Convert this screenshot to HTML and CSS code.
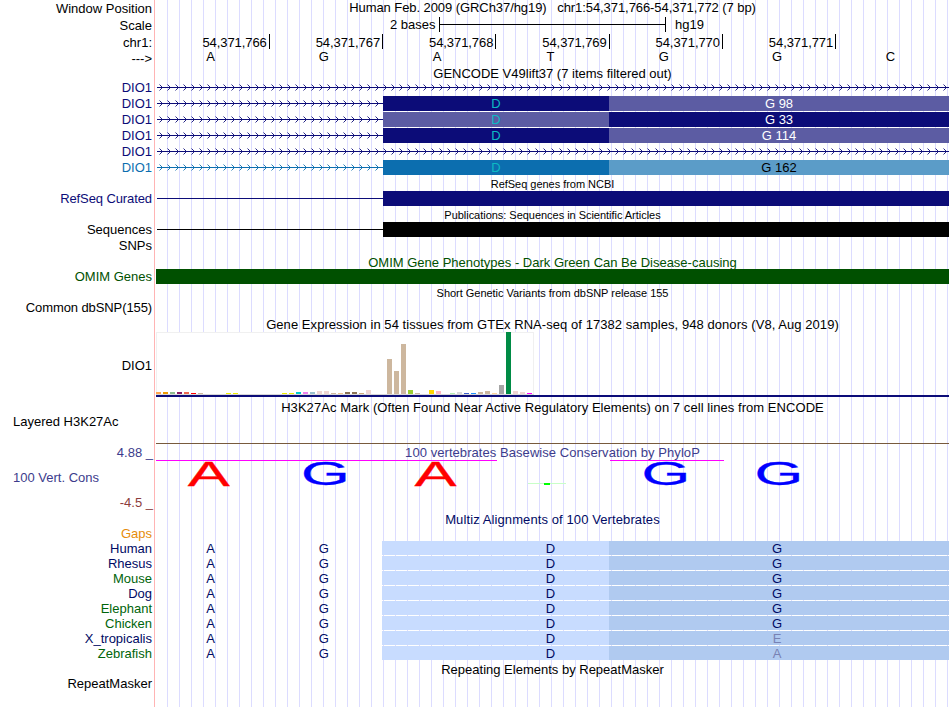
FILE: index.html
```
<!DOCTYPE html>
<html lang="en">
<head>
  <meta charset="UTF-8" />
  <title>Human chr1:54,371,766-54,371,772 Genome Browser</title>
  <link rel="stylesheet" href="styles.css">
</head>
<body>

  <!-- shared arrow patterns for the introns -->
  <svg class="defs" width="0" height="0">
    <defs>
      <pattern id="arrowNavy" width="8" height="16" patternUnits="userSpaceOnUse">
        <path d="M3.5 4.5L6.5 7.5L3.5 10.5" fill="none" stroke="#0c0c78" stroke-width="0.9" />
      </pattern>
      <pattern id="arrowBlue" width="8" height="16" patternUnits="userSpaceOnUse">
        <path d="M3.5 4.5L6.5 7.5L3.5 10.5" fill="none" stroke="#0c6eaf" stroke-width="0.9" />
      </pattern>
    </defs>
  </svg>

  <div class="browser">

    <div class="row h16">
      <div class="label low">Window Position</div>
      <div class="track title tight">Human Feb. 2009 (GRCh37/hg19) &nbsp; chr1:54,371,766-54,371,772 (7 bp)</div>
    </div>
    <div class="row h17">
      <div class="label low">Scale</div>
      <div class="track scale">
        <span class="scale-size">2 bases</span>
        <span class="scale-bar"></span>
        <span>hg19</span>
      </div>
    </div>
    <div class="row h17">
      <div class="label low">chr1:</div>
      <div class="track positions">
        <span>54,371,766</span><span>54,371,767</span><span>54,371,768</span><span>54,371,769</span><span>54,371,770</span><span>54,371,771</span>
      </div>
    </div>
    <div class="row h15">
      <div class="label low">---&gt;</div>
      <div class="track bases sequence">
        <span>A</span><span>G</span><span>A</span><span>T</span><span>G</span><span>G</span><span>C</span>
      </div>
    </div>

    <!-- GENCODE -->
    <div class="row h15">
      <div class="label"></div>
      <div class="track title low">GENCODE V49lift37 (7 items filtered out)</div>
    </div>
    <div class="row h16 navy">
      <div class="label">DIO1</div>
      <div class="track gene">
        <svg class="intron full" height="16"><rect width="100%" height="16" fill="url(#arrowNavy)" /><rect x="1" y="7" width="100%" height="1" fill="#0c0c78" /></svg>
      </div>
    </div>
    <div class="row h16 navy">
      <div class="label">DIO1</div>
      <div class="track gene">
        <svg class="intron" height="16"><rect width="100%" height="16" fill="url(#arrowNavy)" /><rect x="1" y="7" width="100%" height="1" fill="#0c0c78" /></svg>
        <span class="codon first dark">D</span><span class="codon light">G 98</span>
      </div>
    </div>
    <div class="row h16 navy">
      <div class="label">DIO1</div>
      <div class="track gene">
        <svg class="intron" height="16"><rect width="100%" height="16" fill="url(#arrowNavy)" /><rect x="1" y="7" width="100%" height="1" fill="#0c0c78" /></svg>
        <span class="codon first light">D</span><span class="codon dark">G 33</span>
      </div>
    </div>
    <div class="row h16 navy">
      <div class="label">DIO1</div>
      <div class="track gene">
        <svg class="intron" height="16"><rect width="100%" height="16" fill="url(#arrowNavy)" /><rect x="1" y="7" width="100%" height="1" fill="#0c0c78" /></svg>
        <span class="codon first dark">D</span><span class="codon light">G 114</span>
      </div>
    </div>
    <div class="row h16 navy">
      <div class="label">DIO1</div>
      <div class="track gene">
        <svg class="intron full" height="16"><rect width="100%" height="16" fill="url(#arrowNavy)" /><rect x="1" y="7" width="100%" height="1" fill="#0c0c78" /></svg>
      </div>
    </div>
    <div class="row h16 blue">
      <div class="label">DIO1</div>
      <div class="track gene">
        <svg class="intron" height="16"><rect width="100%" height="16" fill="url(#arrowBlue)" /><rect x="1" y="7" width="100%" height="1" fill="#0c6eaf" /></svg>
        <span class="codon first dark">D</span><span class="codon light">G 162</span>
      </div>
    </div>

    <!-- RefSeq / publications / OMIM / dbSNP -->
    <div class="row h15">
      <div class="label"></div>
      <div class="track title small">RefSeq genes from NCBI</div>
    </div>
    <div class="row h16 navy">
      <div class="label snug">RefSeq Curated</div>
      <div class="track item"><span class="thin"></span><span class="thick"></span></div>
    </div>
    <div class="row h15">
      <div class="label"></div>
      <div class="track title small">Publications: Sequences in Scientific Articles</div>
    </div>
    <div class="row h16 black">
      <div class="label">Sequences</div>
      <div class="track item"><span class="thin"></span><span class="thick"></span></div>
    </div>
    <div class="row h16">
      <div class="label">SNPs</div>
      <div class="track"></div>
    </div>
    <div class="row h15 green">
      <div class="label"></div>
      <div class="track title low">OMIM Gene Phenotypes - Dark Green Can Be Disease-causing</div>
    </div>
    <div class="row h16 green">
      <div class="label">OMIM Genes</div>
      <div class="track item"><span class="thick"></span></div>
    </div>
    <div class="row h15">
      <div class="label"></div>
      <div class="track title small">Short Genetic Variants from dbSNP release 155</div>
    </div>
    <div class="row h16">
      <div class="label snug">Common dbSNP(155)</div>
      <div class="track"></div>
    </div>

    <!-- GTEx -->
    <div class="row h16">
      <div class="label"></div>
      <div class="track title low wide">Gene Expression in 54 tissues from GTEx RNA-seq of 17382 samples, 948 donors (V8, Aug 2019)</div>
    </div>
    <div class="row gtex">
      <div class="label">DIO1</div>
      <div class="track gtex-track"><div class="gtex-chart" id="gtex"></div></div>
    </div>

    <!-- H3K27Ac -->
    <div class="row h17 h3k-title">
      <div class="label"></div>
      <div class="track title wide">H3K27Ac Mark (Often Found Near Active Regulatory Elements) on 7 cell lines from ENCODE</div>
    </div>
    <div class="row h3k">
      <div class="label left">Layered H3K27Ac</div>
      <div class="track h3k-line"></div>
    </div>

    <!-- conservation -->
    <div class="row h16 cons">
      <div class="label range low">4.88 _</div>
      <div class="track title wide cons-title">100 vertebrates Basewise Conservation by PhyloP</div>
    </div>
    <div class="row phylop cons">
      <div class="label left">100 Vert. Cons</div>
      <div class="track">
        <svg class="logo" width="793" height="35">
          <rect x="0" y="0" width="341" height="1" fill="#ff00ff" />
          <rect x="454" y="0" width="114" height="1" fill="#ff00ff" />
          <text class="a" transform="translate(52.7 26) scale(1.8 1)">A</text>
          <text class="g" transform="translate(169.5 25.4) scale(1.9 1)">G</text>
          <text class="a" transform="translate(279.5 26) scale(1.8 1)">A</text>
          <rect x="372" y="23" width="38" height="1" fill="#c8ffc8" />
          <rect x="388" y="23" width="6" height="2" fill="#00ff00" />
          <text class="g" transform="translate(510 25.4) scale(1.9 1)">G</text>
          <text class="g" transform="translate(623 25.4) scale(1.9 1)">G</text>
        </svg>
      </div>
    </div>
    <div class="row h17 cons-min">
      <div class="label range">-4.5 _</div>
      <div class="track"></div>
    </div>

    <!-- multiz -->
    <div class="row h15 ink">
      <div class="label"></div>
      <div class="track title wider">Multiz Alignments of 100 Vertebrates</div>
    </div>
    <div class="row h14 gaps">
      <div class="label">Gaps</div>
      <div class="track"></div>
    </div>
    <div class="row h15 ink">
      <div class="label">Human</div>
      <div class="track bases align"><span>A</span><span>G</span><span></span><span>D</span><span></span><span>G</span></div>
    </div>
    <div class="row h15 ink">
      <div class="label">Rhesus</div>
      <div class="track bases align"><span>A</span><span>G</span><span></span><span>D</span><span></span><span>G</span></div>
    </div>
    <div class="row h15 ink">
      <div class="label alt">Mouse</div>
      <div class="track bases align"><span>A</span><span>G</span><span></span><span>D</span><span></span><span>G</span></div>
    </div>
    <div class="row h15 ink">
      <div class="label">Dog</div>
      <div class="track bases align"><span>A</span><span>G</span><span></span><span>D</span><span></span><span>G</span></div>
    </div>
    <div class="row h15 ink">
      <div class="label alt">Elephant</div>
      <div class="track bases align"><span>A</span><span>G</span><span></span><span>D</span><span></span><span>G</span></div>
    </div>
    <div class="row h15 ink">
      <div class="label alt">Chicken</div>
      <div class="track bases align"><span>A</span><span>G</span><span></span><span>D</span><span></span><span>G</span></div>
    </div>
    <div class="row h15 ink">
      <div class="label">X_tropicalis</div>
      <div class="track bases align"><span>A</span><span>G</span><span></span><span>D</span><span></span><span class="diff">E</span></div>
    </div>
    <div class="row h15 ink">
      <div class="label alt">Zebrafish</div>
      <div class="track bases align"><span>A</span><span>G</span><span></span><span>D</span><span></span><span class="diff">A</span></div>
    </div>

    <!-- RepeatMasker -->
    <div class="row h15">
      <div class="label"></div>
      <div class="track title low">Repeating Elements by RepeatMasker</div>
    </div>
    <div class="row h15">
      <div class="label">RepeatMasker</div>
      <div class="track"></div>
    </div>
  </div>

  <script>
    // [height, color] for each of the 54 tissues
    const tissues = [
      [2, '#ffa54f'], [2, '#ee9a00'], [2, '#8fbc8f'], [2, '#8b1c62'], [2, '#ee6a50'], [1, '#ff0000'],
      [1, '#cdb79e'], [0, ''], [0, ''], [0, ''], [1, '#eeee00'], [1, '#eeee00'],
      [0, ''], [0, ''], [0, ''], [0, ''], [0, ''], [0, ''],
      [1, '#eeee00'], [1, '#eeee00'], [2, '#00cdcd'], [2, '#ee82ee'], [2, '#9ac0cd'], [3, '#eed5d2'],
      [3, '#eed5d2'], [1, '#cdb79e'], [1, '#eec591'], [2, '#8b7355'], [2, '#8b7355'], [1, '#cdaa7d'],
      [4, '#eed5d2'], [0, ''], [0, ''], [35, '#cdb79e'], [23, '#cdb79e'], [50, '#cdb79e'],
      [4, '#9acd32'], [1, '#cdb79e'], [0, ''], [4, '#ffd700'], [3, '#ffb6c1'], [0, ''],
      [1, '#b4eeb4'], [2, '#d9d9d9'], [1, '#3a5fcd'], [1, '#1e90ff'], [2, '#cdb79e'], [3, '#cdb79e'],
      [1, '#ffd39b'], [9, '#a6a6a6'], [62, '#008b45'], [3, '#eed5d2'], [2, '#eed5d2'], [1, '#ff00ff']
    ];
    const chart = document.getElementById('gtex');
    tissues.forEach(([height, color]) => {
      const bar = document.createElement('span');
      bar.style.height = height + 'px';
      bar.style.background = color;
      chart.appendChild(bar);
    });
  </script>

</body>
</html>
```
FILE: styles.css
```
body {
  margin: 0;
  background: #fff;
  color: #000;
  font-family: "Liberation Sans", Arial, Helvetica, sans-serif;
  font-size: 13px;
  overflow: hidden;
}
.defs {
  display: block;
}
.browser {
  width: 949px;
  height: 707px;
  /* red edge next to the labels, then a guide line every 12px */
  background:
    linear-gradient(#ffb4b4, #ffb4b4) 154px 0 / 1px 100% no-repeat,
    linear-gradient(#fff, #fff) 0 0 / 156px 100% no-repeat,
    repeating-linear-gradient(to right, transparent 0 11px, #dcdcff 11px 12px) 156px 0 / 793px 100% no-repeat;
}
.row {
  display: flex;
}
.h14 { height: 14px; line-height: 14px; }
.h15 { height: 15px; line-height: 15px; }
.h16 { height: 16px; line-height: 16px; }
.h17 { height: 17px; line-height: 17px; }
.label {
  width: 156px;
  padding-right: 4px;
  box-sizing: border-box;
  flex: none;
  text-align: right;
  white-space: nowrap;
}
.label.left {
  text-align: left;
  padding-left: 13px;
}
.label.range {
  padding-right: 3px;
}
.label.snug {
  letter-spacing: -0.1px;
}
.low {
  padding-top: 1px;
}
.track {
  width: 793px;
  flex: none;
  box-sizing: border-box;
}
.title {
  text-align: center;
  white-space: nowrap;
}
.title.small {
  padding-top: 1px;
  font-size: 11px;
  letter-spacing: -0.03px;
}
.tight { letter-spacing: -0.07px; }
.wide { letter-spacing: 0.06px; }
.wider { letter-spacing: 0.1px; }

/* ruler */
.scale {
  display: flex;
  padding-left: 234px;
}
.scale-size {
  width: 49px;
}
.scale-bar {
  width: 225px;
  height: 15px;
  margin: 1px 9px 0 0;
  border: solid #000;
  border-width: 0 1px;
  background: linear-gradient(#000, #000) 0 7px / 100% 1px no-repeat;
}
.positions,
.bases {
  display: grid;
  grid-template-columns: repeat(7, 1fr);
}
.positions {
  padding-top: 1px;
  letter-spacing: -0.07px;
}
.positions span {
  height: 15px;
  padding-right: 2px;
  border-right: 1px solid #000;
  text-align: right;
  position: relative;
  left: 0.5px;
}
.bases span {
  padding-right: 4px;
  text-align: center;
}
.sequence {
  line-height: 13px;
}

/* items */
.navy { --dark: #0c0c78; --light: #5c5ca3; color: #0c0c78; }
.blue { --dark: #0c6eaf; --light: #5b9cc8; color: #0c6eaf; }
.black { --dark: #000; }
.green { --dark: #005000; color: #005000; }
.gene,
.item {
  display: flex;
}
.intron {
  width: 227px;
  flex: none;
}
.intron.full {
  width: 793px;
}
.codon {
  flex: 1;
  height: 15px;
  line-height: 15px;
  text-align: center;
  color: #fff;
}
.codon.first {
  flex: none;
  width: 226px;
  color: #0cb9c3;
}
.blue .codon.light {
  color: #000;
}
.dark {
  background: var(--dark);
}
.light {
  background: var(--light);
}
.thin {
  width: 226px;
  height: 1px;
  margin: 7px 0 0 1px;
  background: var(--dark);
}
.thick {
  flex: 1;
  height: 15px;
  background: var(--dark);
}

/* GTEx */
.gtex {
  height: 65px;
  line-height: 68px;
}
.gtex-track {
  border-bottom: 2px solid #0c0c78;
}
.gtex-chart {
  display: flex;
  align-items: flex-end;
  gap: 2px;
  width: 378px;
  height: 63px;
  box-sizing: border-box;
  border-bottom: 1px solid #d8d8d8;
  background:
    linear-gradient(#f0f0f0, #f0f0f0) 0 0 / 100% 1px no-repeat,
    linear-gradient(#f0f0f0, #f0f0f0) 0 0 / 1px 100% no-repeat,
    linear-gradient(#f0f0f0, #f0f0f0) 100% 0 / 1px 100% no-repeat,
    #fff;
}
.gtex-chart span {
  width: 5px;
  flex: none;
}

/* H3K27Ac and conservation */
.h3k-title {
  padding-top: 2px;
}
.h3k {
  height: 28px;
  line-height: 12px;
}
.h3k-line {
  border-bottom: 1px solid #785a3c;
}
.cons {
  color: #3c3c8c;
}
.cons-title {
  padding-top: 1px;
}
.phylop {
  height: 35px;
  line-height: 36px;
}
.logo {
  display: block;
  overflow: visible;
}
.logo text {
  font-size: 35px;
  text-anchor: middle;
  stroke-width: 0.3;
}
.logo .a {
  fill: #ff0000;
  stroke: #ff0000;
}
.logo .g {
  fill: #0000ff;
  stroke: #0000ff;
  font-size: 33px;
}
.cons-min {
  color: #8c3c3c;
}
.cons-min .label {
  line-height: 15px;
}

/* alignments */
.ink {
  color: #000a64;
}
.alt {
  color: #00640a;
}
.gaps {
  color: #e68c0a;
}
.align {
  height: 14px;
  background:
    linear-gradient(#c8dcff, #c8dcff) 226px 0 / 227px 100% no-repeat,
    linear-gradient(#b0caf0, #b0caf0) 453px 0 / 340px 100% no-repeat;
}
.diff {
  color: #7882b4;
}
```
